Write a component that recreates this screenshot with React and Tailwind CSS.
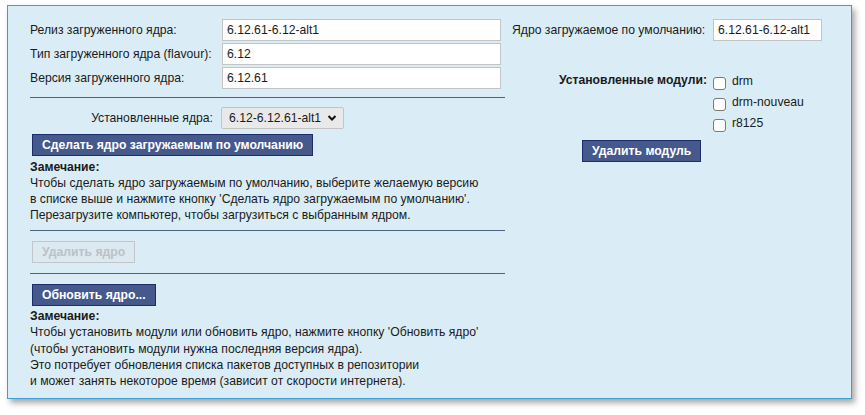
import React from 'react';

const font = { fontFamily: '"Liberation Sans", Arial, sans-serif' };

const Field = ({ label, value }) => (
    <div className="flex items-center h-[22px]">
        <div className="w-[192px] shrink-0 whitespace-nowrap">{label}</div>
        <div className="w-[279px] h-[22px] bg-white border border-[#c4c4c4] flex items-center px-[4px]">
            {value}
        </div>
    </div>
);

const Btn = ({ children, className = '' }) => (
    <button className={`h-[22px] px-[9px] bg-[#46598c] border border-[#1d2c6c] text-white font-bold text-[12.2px] leading-none whitespace-nowrap ${className}`}>
        {children}
    </button>
);

const Hr = ({ className = '' }) => <div className={`h-px bg-[#4a6580] w-[475px] ${className}`} />;

const Checkbox = ({ label }) => (
    <div className="flex items-start h-[21px]">
        <div className="mt-[4px] w-[13px] h-[13px] bg-white border border-[#7b7b7b] rounded-[3px]" />
        <span className="ml-[6px] leading-[16px]">{label}</span>
    </div>
);

export default function App() {
    return (
        <div className="w-[865px] h-[415px] bg-white pt-[5px] pl-[7px]" style={font}>
            <div className="w-[845px] h-[394px] bg-[#daedf6] border border-[#3a9fd6] shadow-[3px_4px_6px_rgba(0,0,0,0.35)] flex text-[12.2px] text-[#1a1a1a]">
                {/* left column */}
                <div className="pl-[22px] pt-[13px] w-[504px] shrink-0 flex flex-col">
                    <div className="flex flex-col gap-[2px]">
                        <Field label="Релиз загруженного ядра:" value="6.12.61-6.12-alt1" />
                        <Field label="Тип загруженного ядра (flavour):" value="6.12" />
                        <Field label="Версия загруженного ядра:" value="6.12.61" />
                    </div>
                    <Hr className="mt-[8px]" />
                    <div className="flex items-center mt-[9px] h-[22px]">
                        <div className="w-[183px] text-right whitespace-nowrap">Установленные ядра:</div>
                        <div className="ml-[8px] h-[22px] w-[123px] bg-[#e9e9e9] border border-[#c4c4c4] rounded-[2px] flex items-center pl-[7px] pr-[6px] justify-between">
                            <span>6.12-6.12.61-alt1</span>
                            <svg width="10" height="8" viewBox="0 0 10 8">
                                <path d="M1.5 2 L5 5.5 L8.5 2" fill="none" stroke="#111" strokeWidth="2" />
                            </svg>
                        </div>
                    </div>
                    <div className="mt-[5px] ml-[2px]">
                        <Btn>Сделать ядро загружаемым по умолчанию</Btn>
                    </div>
                    <div className="mt-[3px] leading-[16px] whitespace-nowrap">
                        <div className="font-bold">Замечание:</div>
                        <div>Чтобы сделать ядро загружаемым по умолчанию, выберите желаемую версию</div>
                        <div>в списке выше и нажмите кнопку 'Сделать ядро загружаемым по умолчанию'.</div>
                        <div>Перезагрузите компьютер, чтобы загрузиться с выбранным ядром.</div>
                    </div>
                    <Hr className="mt-[7px]" />
                    <div className="mt-[10px] ml-[2px]">
                        <button className="h-[22px] px-[9px] bg-[#dde9f0] border border-[#c2c6c8] text-[#b9c2c8] font-bold text-[12.2px] leading-none">
                            Удалить ядро
                        </button>
                    </div>
                    <Hr className="mt-[10px]" />
                    <div className="mt-[10px] ml-[2px]">
                        <Btn>Обновить ядро...</Btn>
                    </div>
                    <div className="mt-[2px] leading-[16.3px] whitespace-nowrap">
                        <div className="font-bold">Замечание:</div>
                        <div>Чтобы установить модули или обновить ядро, нажмите кнопку 'Обновить ядро'</div>
                        <div>(чтобы установить модули нужна последняя версия ядра).</div>
                        <div>Это потребует обновления списка пакетов доступных в репозитории</div>
                        <div>и может занять некоторое время (зависит от скорости интернета).</div>
                    </div>
                </div>

                {/* right column */}
                <div className="pt-[13px] flex flex-col">
                    <div className="flex items-center h-[22px]">
                        <div className="w-[201px] whitespace-nowrap">Ядро загружаемое по умолчанию:</div>
                        <div className="w-[109px] h-[22px] bg-white border border-[#c4c4c4] flex items-center px-[4px] whitespace-nowrap">
                            6.12.61-6.12-alt1
                        </div>
                    </div>
                    <div className="flex mt-[32px]">
                        <div className="w-[195px] text-right font-bold leading-[16px] mt-[-1px] whitespace-nowrap">Установленные модули:</div>
                        <div className="ml-[6px] flex flex-col">
                            <Checkbox label="drm" />
                            <Checkbox label="drm-nouveau" />
                            <Checkbox label="r8125" />
                        </div>
                    </div>
                    <div className="mt-[4px] ml-[70px]">
                        <Btn>Удалить модуль</Btn>
                    </div>
                </div>
            </div>
        </div>
    );
}
